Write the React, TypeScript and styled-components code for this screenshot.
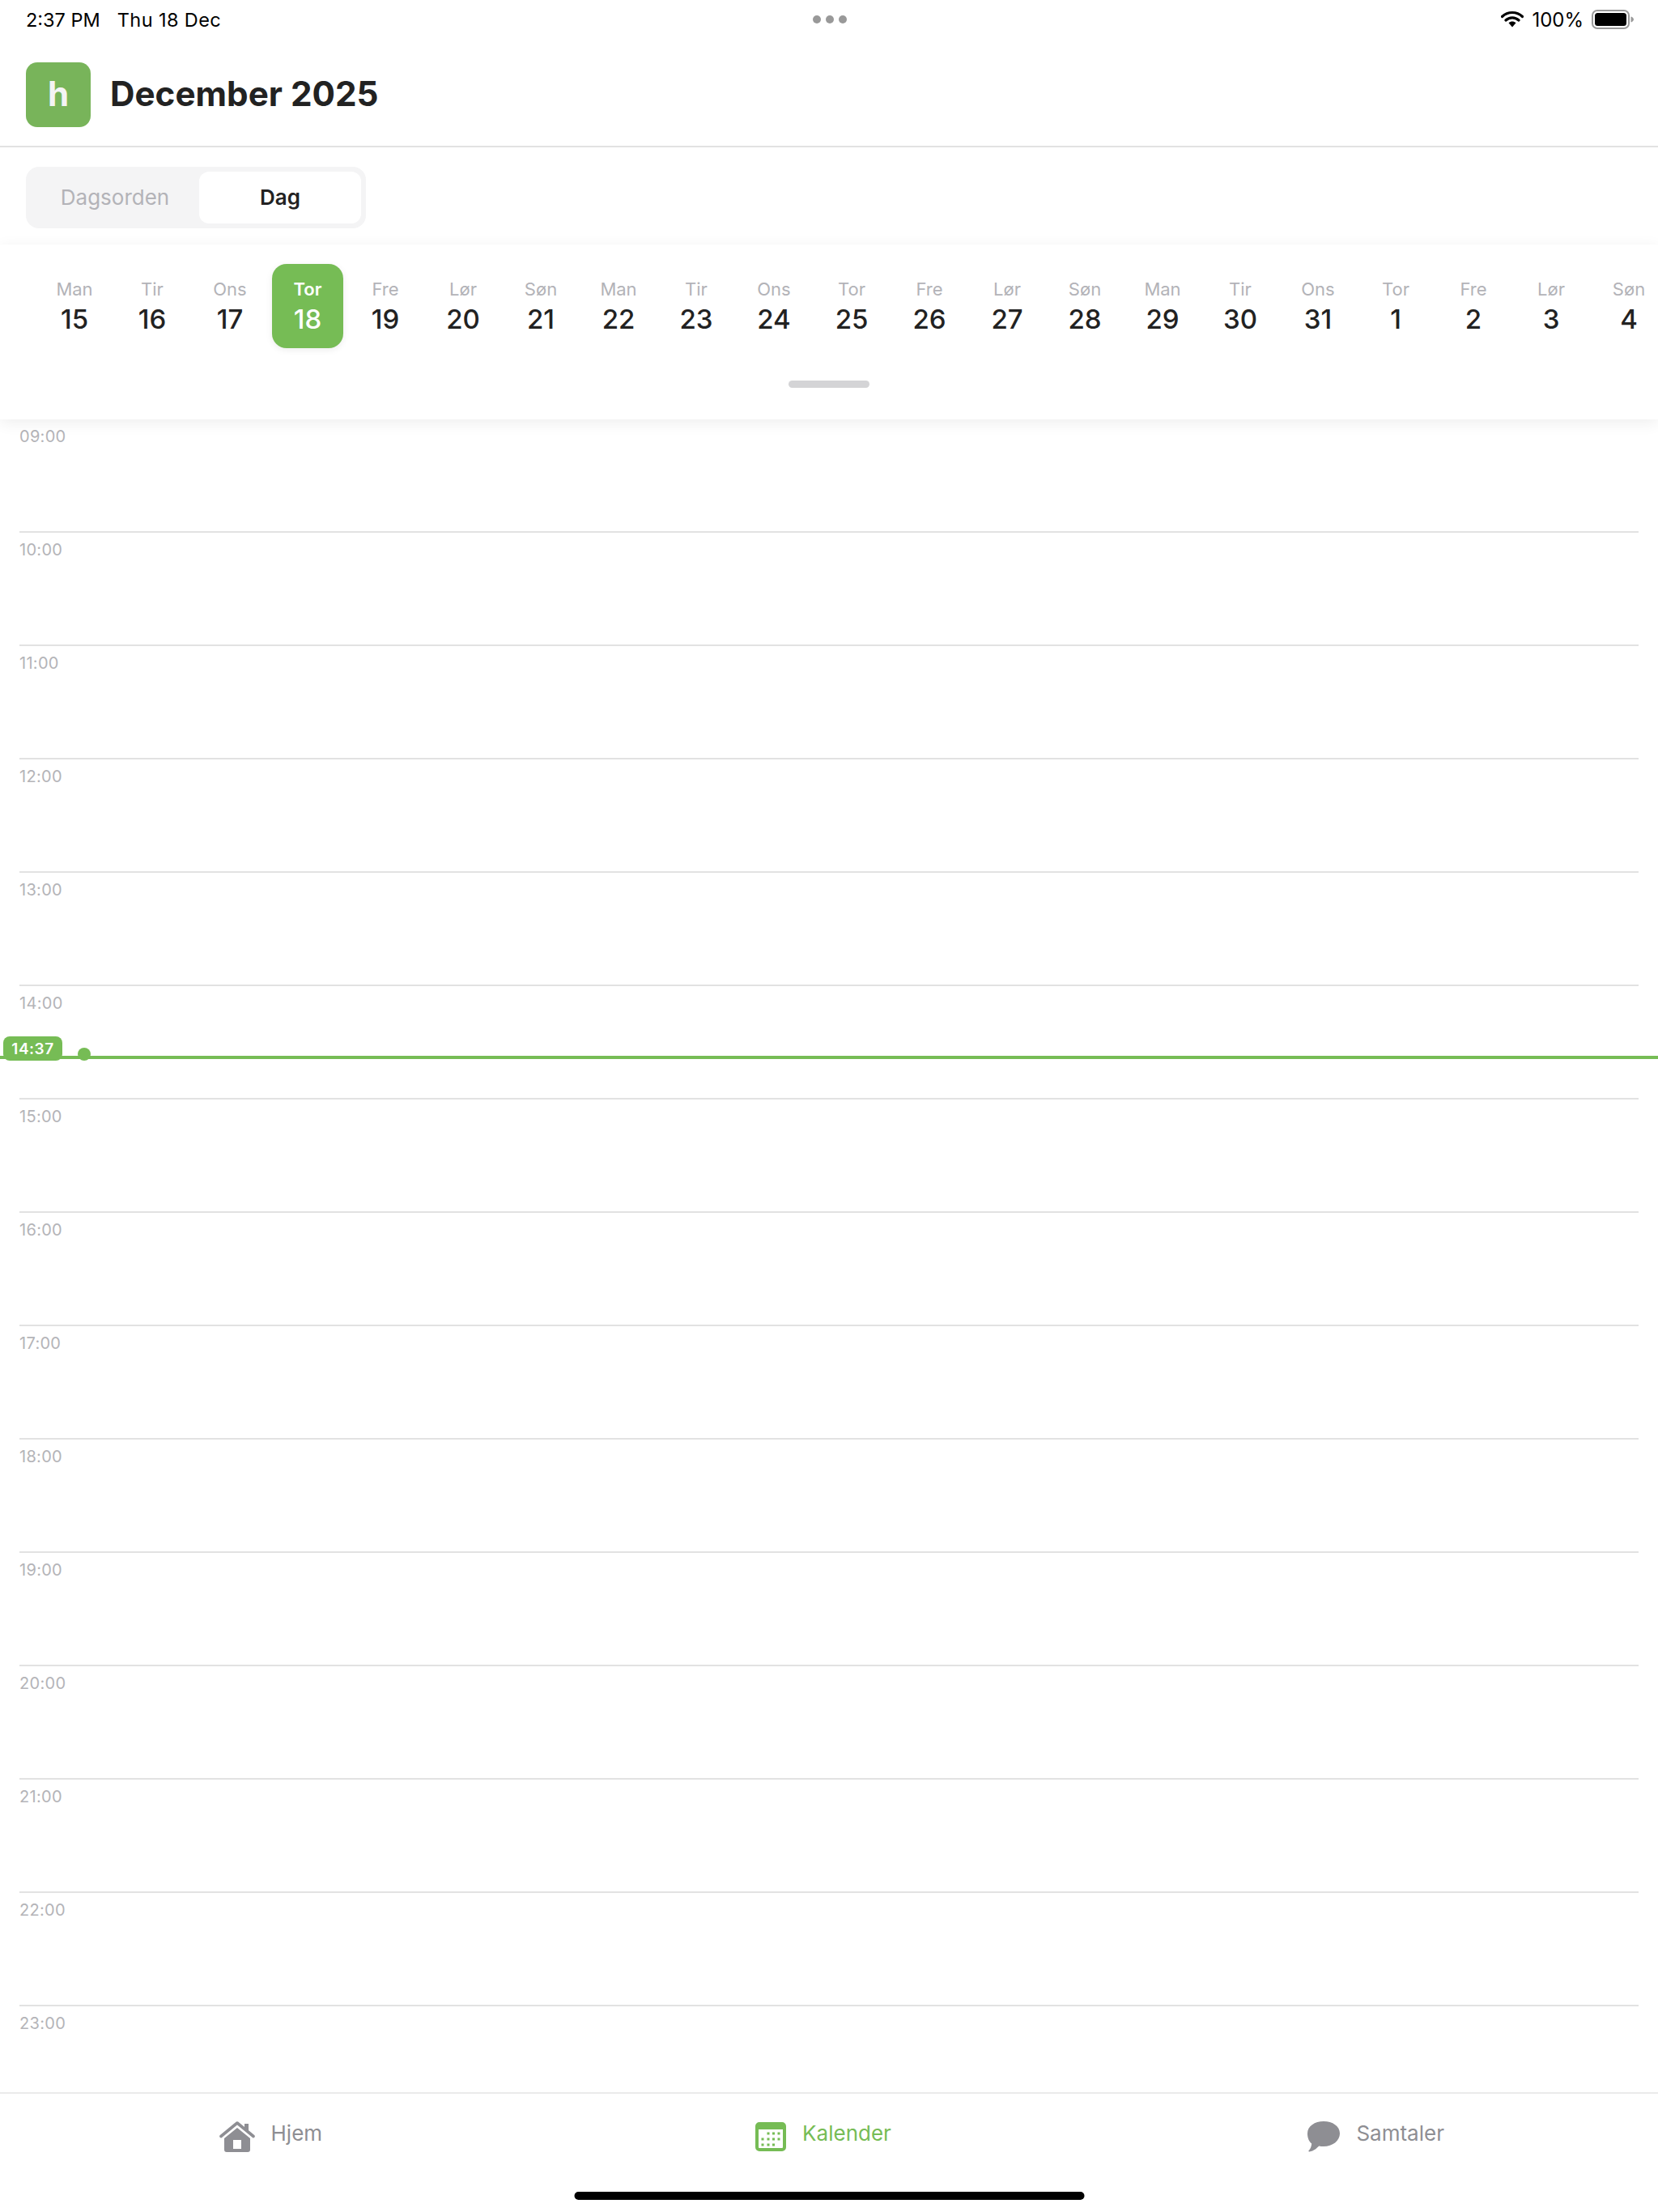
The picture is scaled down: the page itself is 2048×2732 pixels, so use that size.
import React from 'react'
import styled, { createGlobalStyle } from 'styled-components'

const GlobalStyle = createGlobalStyle`
  html, body {
    margin: 0;
    padding: 0;
    background: #fff;
    font-family: Inter, "Liberation Sans", sans-serif;
  }
`

const green = '#76bc55'

const Page = styled.div`
  width: 2048px;
  height: 2732px;
  display: flex;
  flex-direction: column;
  overflow: hidden;
  background: #fff;
`

const StatusBar = styled.div`
  height: 48px;
  padding: 0 30px 0 32px;
  display: grid;
  grid-template-columns: 1fr auto 1fr;
  align-items: center;
  font-size: 24px;
  color: #000;
`

const StatusLeft = styled.div`
  display: flex;
  gap: 21px;
  font-size: 23.5px;
`

const StatusDate = styled.span`
  letter-spacing: 0.4px;
`

const Dots = styled.div`
  display: flex;
  gap: 6px;

  i {
    width: 10px;
    height: 10px;
    border-radius: 50%;
    background: #999;
  }
`

const StatusRight = styled.div`
  display: flex;
  justify-content: flex-end;
  align-items: center;
  gap: 10px;
`

const Header = styled.header`
  height: 134px;
  padding: 29px 0 0 32px;
  box-sizing: border-box;
  display: flex;
  align-items: flex-start;
  gap: 24px;
  border-bottom: 2px solid #e2e2e2;
`

const Logo = styled.div`
  width: 80px;
  height: 80px;
  border-radius: 14px;
  background: #78b45a;
  color: #f4f4f4;
  display: flex;
  align-items: center;
  justify-content: center;
  font-size: 42px;
  font-weight: 700;
  padding-bottom: 4px;
  box-sizing: border-box;
`

const Title = styled.h1`
  margin: 11px 0 0;
  font-size: 42.2px;
  line-height: 56px;
  font-weight: 700;
  color: #222;
`

const TabsRow = styled.div`
  height: 120px;
  padding: 24px 0 0 32px;
  box-sizing: border-box;
`

const Tabs = styled.div`
  width: 420px;
  height: 76px;
  box-sizing: border-box;
  padding: 6px;
  border-radius: 16px;
  background: #f4f4f5;
  display: flex;
  justify-content: space-between;
`

const Tab = styled.div<{ $active?: boolean }>`
  width: ${p => (p.$active ? '200px' : '208px')};
  padding-bottom: 1px;
  box-sizing: border-box;
  border-radius: 12px;
  display: flex;
  align-items: center;
  justify-content: center;
  font-size: 26px;
  font-weight: ${p => (p.$active ? 600 : 400)};
  color: ${p => (p.$active ? '#222' : '#b3b3b8')};
  background: ${p => (p.$active ? '#fff' : 'transparent')};
`

const Strip = styled.section`
  position: relative;
  z-index: 2;
  height: 216px;
  box-sizing: border-box;
  background: #fff;
  padding-top: 24px;
  box-shadow: 0 4px 18px rgba(0, 0, 0, 0.07);
`

const Days = styled.div`
  display: flex;
  gap: 8px;
  padding-left: 48px;
`

const Day = styled.div<{ $selected?: boolean }>`
  flex: 0 0 88px;
  height: 104px;
  box-sizing: border-box;
  padding-top: 18px;
  border-radius: 18px;
  display: flex;
  flex-direction: column;
  align-items: center;
  background: ${p => (p.$selected ? green : 'transparent')};
  box-shadow: ${p => (p.$selected ? '0 2px 8px rgba(0, 0, 0, 0.08)' : 'none')};
`

const DayName = styled.span<{ $selected?: boolean }>`
  font-size: 22px;
  line-height: 26px;
  font-weight: ${p => (p.$selected ? 600 : 400)};
  color: ${p => (p.$selected ? '#fff' : '#b3b3b8')};
`

const DayNumber = styled.span<{ $selected?: boolean }>`
  margin-top: 6px;
  font-size: 33px;
  line-height: 36px;
  font-weight: 500;
  color: ${p => (p.$selected ? '#fff' : '#222')};
`

const Handle = styled.div`
  width: 100px;
  height: 9px;
  margin: 40px auto 0;
  border-radius: 5px;
  background: #d4d4d6;
`

const Timeline = styled.main`
  position: relative;
  flex: 1;
  min-height: 0;
  overflow: hidden;
`

const Hours = styled.div`
  margin-top: -2px;
  padding: 0 24px;
`

const HourRow = styled.div`
  height: 140px;
  box-sizing: border-box;
  border-top: 2px solid #e2e2e2;
  padding-top: 9px;
  font-size: 20px;
  line-height: 24px;
  letter-spacing: 0.3px;
  color: #b4b4b8;
`

const NowLine = styled.div`
  position: absolute;
  left: 0;
  right: 0;
  top: 786px;
  height: 4px;
  background: ${green};
`

const NowTag = styled.div`
  position: absolute;
  left: 4px;
  top: -24px;
  width: 73px;
  height: 30px;
  border-radius: 8px;
  background: ${green};
  color: #fff;
  font-size: 19px;
  font-weight: 600;
  line-height: 31px;
  text-align: center;
  letter-spacing: 0.5px;
`

const NowDot = styled.div`
  position: absolute;
  left: 96px;
  top: -10px;
  width: 16px;
  height: 16px;
  border-radius: 50%;
  background: ${green};
`

const BottomBar = styled.nav`
  height: 148px;
  box-sizing: border-box;
  border-top: 2px solid #eaeaea;
  display: flex;
  flex-direction: column;
`

const NavItems = styled.div`
  display: grid;
  grid-template-columns: repeat(3, 1fr);
  padding-top: 32px;
`

const NavItem = styled.div<{ $active?: boolean }>`
  display: flex;
  align-items: center;
  justify-content: center;
  gap: 20px;
  height: 42px;
  padding-right: 14px;
  font-size: 26px;
  color: ${p => (p.$active ? green : '#8e8e93')};

  svg {
    flex: none;
  }
`

const NavLabel = styled.span`
  margin-bottom: 9px;
`

const HomeIndicator = styled.div`
  width: 630px;
  height: 10px;
  margin: 47px auto 0;
  transform: translateX(0.5px);
  border-radius: 5px;
  background: #000;
`

const WifiIcon = () => (
  <svg width="28" height="22" viewBox="0 0 28 22">
    <path
      d="M1.5 7.5C8.5 .8 19.5 .8 26.5 7.5M6 12c4.6-4.2 11.4-4.2 16 0"
      fill="none"
      stroke="#000"
      strokeWidth="3.2"
      strokeLinecap="round"
    />
    <path d="M9.5 15.2c2.8-2.2 6.2-2.2 9 0L14 20.5z" fill="#000" />
  </svg>
)

const BatteryIcon = () => (
  <svg width="52" height="24" viewBox="0 0 52 24">
    <rect x="1" y="1" width="45" height="22" rx="6" fill="none" stroke="#9a9a9a" strokeWidth="2" />
    <rect x="4" y="4" width="39" height="16" rx="3.5" fill="#000" />
    <path d="M48.500 8.500c2.200.6 3.500 2 3.500 3.500s-1.300 2.900-3.500 3.500z" fill="#9a9a9a" />
  </svg>
)

const HomeIcon = () => (
  <svg width="44" height="38" viewBox="0 0 44 38">
    <path d="M31 3h5v10l-5-4z" fill="#8e8e93" />
    <path
      d="M2 18.5 22 2l20 16.5"
      fill="none"
      stroke="#8e8e93"
      strokeWidth="3.6"
      strokeLinecap="round"
      strokeLinejoin="round"
    />
    <path
      fillRule="evenodd"
      d="M22 8l16 13v14a3 3 0 0 1-3 3H9a3 3 0 0 1-3-3V21zM17 23v11h10V23z"
      fill="#8e8e93"
    />
  </svg>
)

const CalendarIcon = () => {
  const dots = [
    [16, 14], [22.5, 14], [29, 14],
    [9, 21], [16, 21], [22.5, 21], [29, 21],
    [9, 28], [16, 28], [22.5, 28],
  ]
  return (
    <svg width="38" height="36" viewBox="0 0 38 36">
      <path
        fillRule="evenodd"
        d="M5 0h28a5 5 0 0 1 5 5v26a5 5 0 0 1-5 5H5a5 5 0 0 1-5-5V5a5 5 0 0 1 5-5zM4 9v22a1 1 0 0 0 1 1h28a1 1 0 0 0 1-1V9z"
        fill={green}
      />
      {dots.map(([x, y]) => (
        <rect key={`${x}-${y}`} x={x - 1.5} y={y - 1.5} width="3" height="3" fill={green} />
      ))}
    </svg>
  )
}

const ChatIcon = () => (
  <svg width="40" height="38" viewBox="0 0 40 38">
    <path
      d="M20 0c11 0 20 6 20 15 0 9-9 16-20 16-2 0-4-.2-5.800-.6C11.500 33 8 36.500 2.500 37.500c-1.200.2-1.500-.8-.8-1.500 1.800-1.800 3.300-5 3.500-8.500C2 25 0 20.500 0 15 0 6 9 0 20 0z"
      fill="#8e8e93"
    />
  </svg>
)

const days: [string, number][] = [
  ['Man', 15], ['Tir', 16], ['Ons', 17], ['Tor', 18], ['Fre', 19], ['Lør', 20], ['Søn', 21],
  ['Man', 22], ['Tir', 23], ['Ons', 24], ['Tor', 25], ['Fre', 26], ['Lør', 27], ['Søn', 28],
  ['Man', 29], ['Tir', 30], ['Ons', 31], ['Tor', 1], ['Fre', 2], ['Lør', 3], ['Søn', 4],
]

const hours = Array.from({ length: 15 }, (_, i) => `${String(i + 9).padStart(2, '0')}:00`)

export default function App() {
  return (
    <Page>
      <GlobalStyle />
      <StatusBar>
        <StatusLeft>
          <span>2:37 PM</span>
          <StatusDate>Thu 18 Dec</StatusDate>
        </StatusLeft>
        <Dots>
          <i />
          <i />
          <i />
        </Dots>
        <StatusRight>
          <WifiIcon />
          <span>100%</span>
          <BatteryIcon />
        </StatusRight>
      </StatusBar>
      <Header>
        <Logo>h</Logo>
        <Title>December 2025</Title>
      </Header>
      <TabsRow>
        <Tabs>
          <Tab>Dagsorden</Tab>
          <Tab $active>Dag</Tab>
        </Tabs>
      </TabsRow>
      <Strip>
        <Days>
          {days.map(([name, num]) => {
            const selected = name === 'Tor' && num === 18
            return (
              <Day key={`${name}${num}`} $selected={selected}>
                <DayName $selected={selected}>{name}</DayName>
                <DayNumber $selected={selected}>{num}</DayNumber>
              </Day>
            )
          })}
        </Days>
        <Handle />
      </Strip>
      <Timeline>
        <Hours>
          {hours.map(h => (
            <HourRow key={h}>{h}</HourRow>
          ))}
        </Hours>
        <NowLine>
          <NowTag>14:37</NowTag>
          <NowDot />
        </NowLine>
      </Timeline>
      <BottomBar>
        <NavItems>
          <NavItem>
            <HomeIcon />
            <NavLabel>Hjem</NavLabel>
          </NavItem>
          <NavItem $active>
            <CalendarIcon />
            <NavLabel>Kalender</NavLabel>
          </NavItem>
          <NavItem>
            <ChatIcon />
            <NavLabel>Samtaler</NavLabel>
          </NavItem>
        </NavItems>
        <HomeIndicator />
      </BottomBar>
    </Page>
  )
}
